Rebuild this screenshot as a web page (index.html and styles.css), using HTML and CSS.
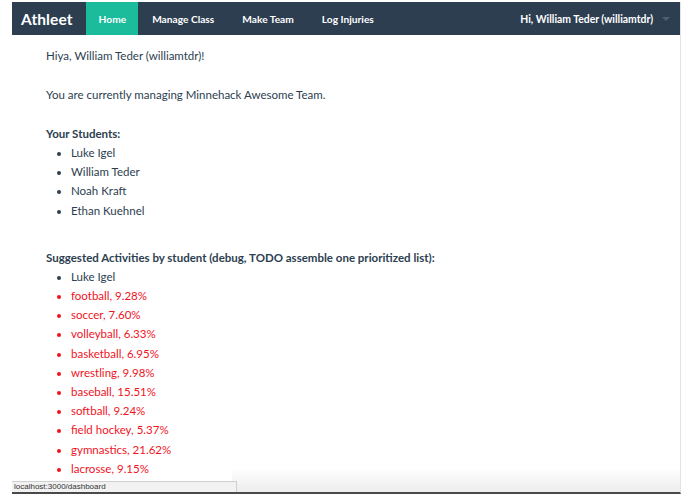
FILE: index.html
```html
<!DOCTYPE html>
<html>
<head>
<meta charset="utf-8">
<link rel="stylesheet" href="styles.css">
</head>
<body>
<div class="window">
  <nav class="navbar">
    <div class="nav-left">
      <span class="brand">Athleet</span>
      <span class="nav-item active">Home</span>
      <span class="nav-item">Manage Class</span>
      <span class="nav-item">Make Team</span>
      <span class="nav-item">Log Injuries</span>
    </div>
    <div class="nav-right">
      <span class="user">Hi, William Teder (williamtdr)</span>
      <span class="caret"></span>
    </div>
  </nav>
  <main class="content">
    <p class="line">Hiya, William Teder (williamtdr)!</p>
    <p class="line gap">You are currently managing Minnehack Awesome Team.</p>
    <p class="line gap heading">Your Students:</p>
    <ul class="list">
      <li>Luke Igel</li>
      <li>William Teder</li>
      <li>Noah Kraft</li>
      <li>Ethan Kuehnel</li>
    </ul>
    <p class="line heading section">Suggested Activities by student (debug, TODO assemble one prioritized list):</p>
    <ul class="list">
      <li>Luke Igel</li>
      <li class="red">football, 9.28%</li>
      <li class="red">soccer, 7.60%</li>
      <li class="red">volleyball, 6.33%</li>
      <li class="red">basketball, 6.95%</li>
      <li class="red">wrestling, 9.98%</li>
      <li class="red">baseball, 15.51%</li>
      <li class="red">softball, 9.24%</li>
      <li class="red">field hockey, 5.37%</li>
      <li class="red">gymnastics, 21.62%</li>
      <li class="red">lacrosse, 9.15%</li>
    </ul>
  </main>
  <div class="shade"></div>
  <div class="status">localhost:3000/dashboard</div>
</div>
</body>
</html>
```
FILE: styles.css
```css
html, body {
  margin: 0;
  padding: 0;
  background: #ffffff;
  overflow: hidden;
}
body {
  font-family: Lato, "Open Sans", sans-serif;
  color: #2c3e50;
  height: 494px;
}
.window {
  position: relative;
  margin-left: 12px;
  margin-top: 2px;
  width: 668px;
  height: 490px;
  border-right: 1px solid #e4e4e4;
  border-bottom: 2px solid #4a4a4a;
  overflow: hidden;
  background: #fff;
}
.navbar {
  height: 33px;
  background: #2c3e50;
  display: flex;
  justify-content: space-between;
  align-items: stretch;
  color: #fff;
  font-weight: 700;
  font-size: 10.2px;
}
.nav-left, .nav-right {
  display: flex;
  align-items: center;
}
.brand {
  font-size: 15.5px;
  padding: 0 13px 0 9px;
  letter-spacing: 0.1px;
}
.nav-item {
  height: 100%;
  display: flex;
  align-items: center;
  padding: 0 14px;
}
.nav-item.active {
  background: #1abc9c;
  padding: 0 12px 0 13px;
}
.nav-right {
  padding-right: 10px;
  font-size: 10.4px;
}
.caret {
  display: inline-block;
  margin-left: 9px;
  width: 0;
  height: 0;
  border-left: 4px solid transparent;
  border-right: 4px solid transparent;
  border-top: 4px solid #4c5f73;
}
.content {
  padding: 11px 0 0 34px;
  font-size: 11.5px;
  line-height: 19px;
}
.line {
  margin: 0;
}
.gap {
  margin-top: 20px;
}
.heading {
  font-weight: 700;
}
.section {
  margin-top: 28px;
}
.list {
  margin: 0;
  padding-left: 25px;
}
.list li {
  line-height: 19.2px;
}
.red {
  color: #f0131e;
}
.shade {
  position: absolute;
  left: 220px;
  right: 0;
  bottom: 0;
  height: 24px;
  background: linear-gradient(to bottom, rgba(235,235,235,0) 0%, rgba(235,235,235,0.9) 100%);
}
.status {
  position: absolute;
  left: 0;
  bottom: 0;
  width: 222px;
  height: 10px;
  padding-left: 2px;
  background: #f2f2f2;
  border: 1px solid #cfcfcf;
  border-left: none;
  border-bottom: none;
  font-family: "Liberation Sans", Arial, sans-serif;
  font-size: 8px;
  line-height: 10px;
  color: #333;
}
```
